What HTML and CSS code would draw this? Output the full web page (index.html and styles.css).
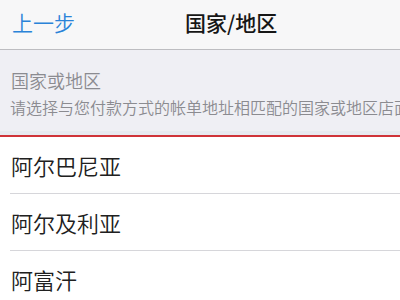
FILE: index.html
```html
<!DOCTYPE html>
<html lang="zh-CN">
<head>
    <meta charset="UTF-8">
    <meta name="viewport" content="width=device-width, initial-scale=1.0">
    <title>国家/地区</title>
    <link rel="stylesheet" href="styles.css">
</head>
<body>

    <!-- Navigation Bar -->
    <header class="nav">
        <a class="nav-back" href="#">上一步</a>
        <div class="nav-title">国家/地区</div>
    </header>

    <!-- Section Header -->
    <section class="group-head">
        <div class="group-title">国家或地区</div>
        <div class="group-note">请选择与您付款方式的帐单地址相匹配的国家或地区店面。</div>
    </section>

    <!-- Country List -->
    <ul class="list">
        <li class="list-item">阿尔巴尼亚</li>
        <li class="list-item">阿尔及利亚</li>
        <li class="list-item">阿富汗</li>
    </ul>

</body>
</html>
```

FILE: styles.css
```css
body {
    margin: 0;
    width: 400px;
    height: 300px;
    overflow: hidden;
    background: #ffffff;
    font-family: "Noto Sans CJK SC", "Noto Sans", sans-serif;
}
.nav {
    display: flex;
    align-items: center;
    height: 50px;
    padding: 0 0 6px 12px;
    box-sizing: border-box;
    background: #f7f7f8;
    border-bottom: 1px solid #bdbdc1;
}
.nav-back {
    font-size: 21px;
    font-weight: 350;
    color: #2a83d8;
    text-decoration: none;
}
.nav-title {
    margin-left: 110px;
    font-size: 21px;
    font-weight: 500;
    color: #161616;
}
.group-head {
    height: 87px;
    padding: 19px 0 0 11px;
    box-sizing: border-box;
    background: linear-gradient(#efeff4 0, #efeff4 81px, #e7eaf0 81px);
    border-bottom: 2px solid #cf3338;
    white-space: nowrap;
    overflow: hidden;
}
.group-title {
    font-size: 18px;
    line-height: 22px;
    font-weight: 350;
    color: #8b8b90;
}
.group-note {
    margin-top: 5px;
    margin-left: -1px;
    font-size: 16px;
    line-height: 22px;
    font-weight: 350;
    color: #8b8b90;
}
.list {
    margin: 0;
    padding: 0 0 0 10px;
    list-style: none;
}
.list-item {
    height: 56px;
    display: flex;
    align-items: center;
    padding-left: 1px;
    font-size: 22px;
    font-weight: 350;
    color: #202020;
    border-bottom: 1px solid #d6d6da;
}
```
